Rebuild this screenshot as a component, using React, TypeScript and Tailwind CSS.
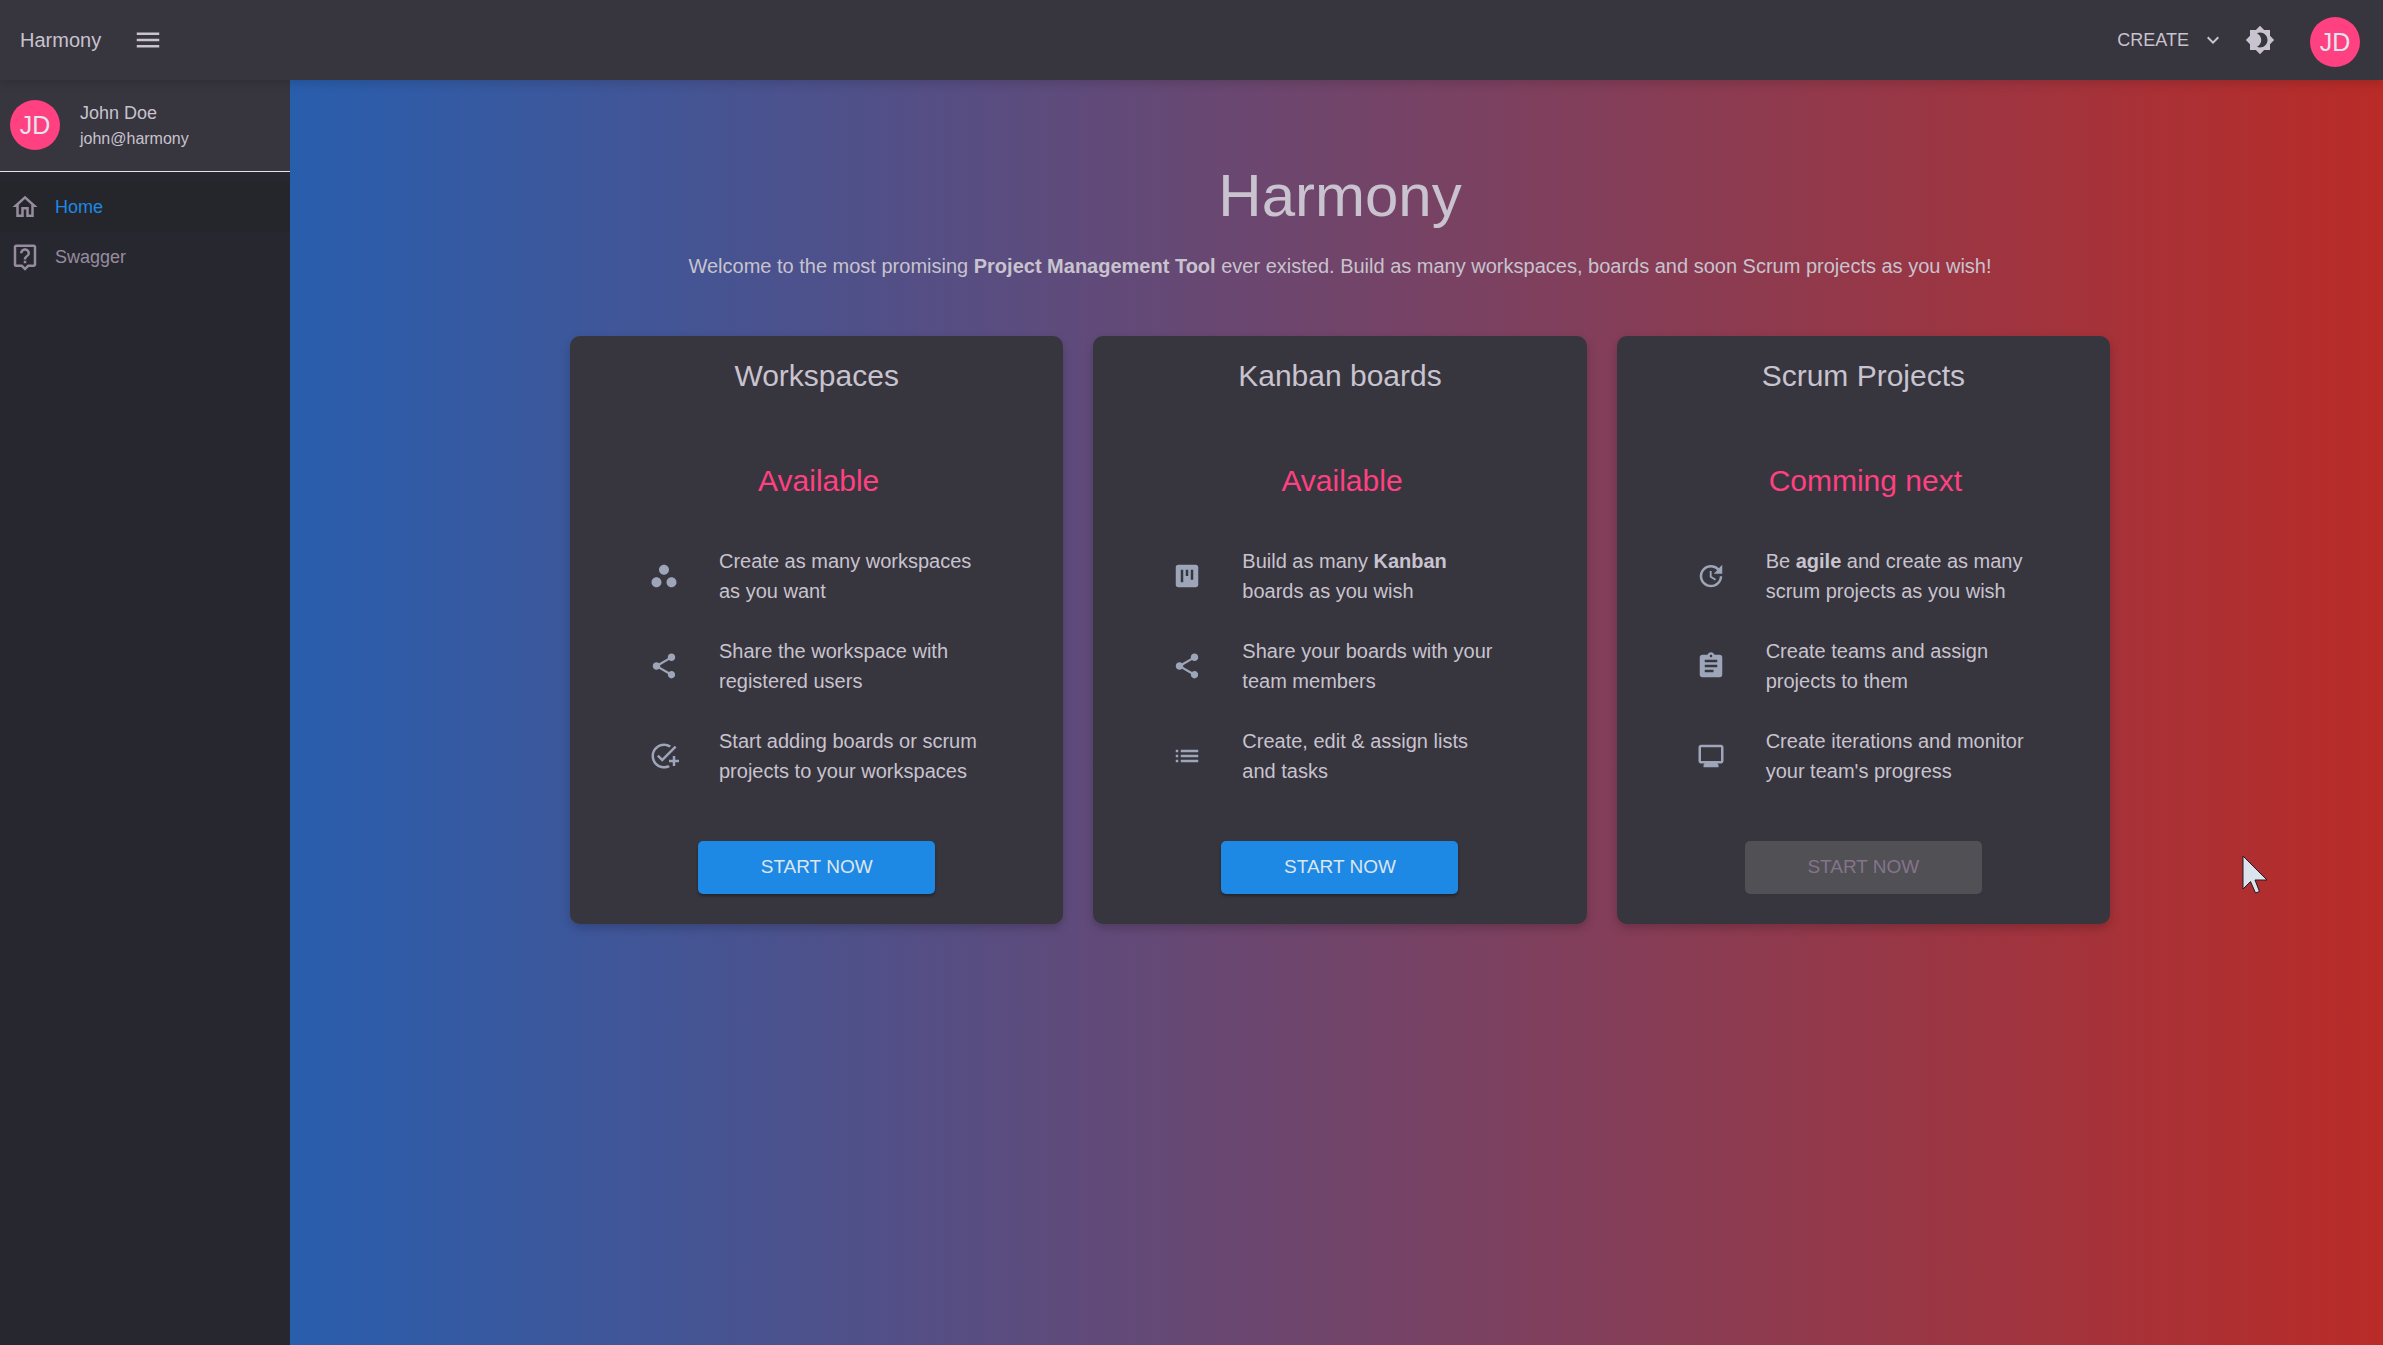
import type { ReactNode } from "react";
import type { IconType } from "react-icons";
import {
  MdAddTask,
  MdAssignment,
  MdBrightness4,
  MdExpandMore,
  MdList,
  MdMenu,
  MdMonitor,
  MdOutlineHome,
  MdOutlineLiveHelp,
  MdShare,
  MdUpdate,
  MdViewKanban,
  MdWorkspaces,
} from "react-icons/md";

type Feature = { icon: IconType; text: ReactNode };
type Plan = { title: string; status: string; disabled?: boolean; features: Feature[] };

const plans: Plan[] = [
  {
    title: "Workspaces",
    status: "Available",
    features: [
      { icon: MdWorkspaces, text: <>Create as many workspaces<br />as you want</> },
      { icon: MdShare, text: <>Share the workspace with<br />registered users</> },
      { icon: MdAddTask, text: <>Start adding boards or scrum<br />projects to your workspaces</> },
    ],
  },
  {
    title: "Kanban boards",
    status: "Available",
    features: [
      { icon: MdViewKanban, text: <>Build as many <b>Kanban</b><br />boards as you wish</> },
      { icon: MdShare, text: <>Share your boards with your<br />team members</> },
      { icon: MdList, text: <>Create, edit &amp; assign lists<br />and tasks</> },
    ],
  },
  {
    title: "Scrum Projects",
    status: "Comming next",
    disabled: true,
    features: [
      { icon: MdUpdate, text: <>Be <b>agile</b> and create as many<br />scrum projects as you wish</> },
      { icon: MdAssignment, text: <>Create teams and assign<br />projects to them</> },
      { icon: MdMonitor, text: <>Create iterations and monitor<br />your team's progress</> },
    ],
  },
];

function Avatar() {
  return (
    <span className="flex size-[50px] shrink-0 items-center justify-center rounded-full bg-[#ff4081] text-[25px] leading-none text-[#dfe5ee]">
      JD
    </span>
  );
}

function Header() {
  return (
    <header className="z-10 flex h-20 items-center bg-[#37353e] pl-5 pr-[23px] shadow-[0_3px_10px_rgba(0,0,0,0.15)]">
      <span className="text-xl">Harmony</span>
      <button type="button" aria-label="Toggle menu" className="ml-8">
        <MdMenu size={30} />
      </button>
      <div className="ml-auto flex items-center">
        <button type="button" className="flex items-center gap-3 text-lg">
          CREATE
          <MdExpandMore size={24} />
        </button>
        <button type="button" aria-label="Toggle dark mode" className="ml-5">
          <MdBrightness4 size={30} />
        </button>
        <button type="button" aria-label="Account" className="ml-[35px] pt-1">
          <Avatar />
        </button>
      </div>
    </header>
  );
}

function Sidebar() {
  return (
    <aside className="w-[290px] shrink-0 bg-[#27272f]">
      <div className="flex gap-5 border-b border-[#e6e4ea] bg-[#37353e] px-2.5 pb-[19px] pt-5">
        <Avatar />
        <div>
          <p className="text-lg leading-[26px]">John Doe</p>
          <p className="text-base leading-[26px]">john@harmony</p>
        </div>
      </div>
      <nav className="flex flex-col pt-2.5 text-lg text-[#978c9f]">
        <a href="#home" className="flex h-[50px] items-center gap-[15px] bg-[#25262b] px-2.5">
          <MdOutlineHome size={30} />
          <span className="text-[#1e88e5]">Home</span>
        </a>
        <a href="#swagger" className="flex h-[50px] items-center gap-[15px] px-2.5">
          <MdOutlineLiveHelp size={30} />
          <span>Swagger</span>
        </a>
      </nav>
    </aside>
  );
}

function PlanCard({ title, status, disabled, features }: Plan) {
  return (
    <section className="flex flex-col rounded-[10px] bg-[#37353e] pb-[30px] pt-5 shadow-[0_4px_10px_rgba(0,0,0,0.2)]">
      <h2 className="text-center text-3xl leading-10">{title}</h2>
      <p className="mt-[65px] pl-1 text-center text-3xl leading-10 text-[#ff4081]">{status}</p>
      <ul className="mt-[45px] flex flex-col gap-[30px] pl-[79px]">
        {features.map(({ icon: Icon, text }, i) => (
          <li key={i} className="flex items-center gap-10">
            <Icon size={30} className="shrink-0 text-[#9da6b9]" />
            <p className="text-xl leading-[30px]">{text}</p>
          </li>
        ))}
      </ul>
      <button
        type="button"
        disabled={disabled}
        className="mt-[55px] h-[53px] w-[237px] self-center rounded-[5px] bg-[#1e88e5] text-[19px] text-[#dfe5ee] shadow-[0_2px_3px_rgba(0,0,0,0.35)] disabled:bg-[#505055] disabled:text-[#85748c] disabled:shadow-none"
      >
        START NOW
      </button>
    </section>
  );
}

function Pointer() {
  return (
    <svg
      className="absolute right-[115px] top-[855px]"
      width="26"
      height="40"
      viewBox="0 0 26 40"
      aria-hidden="true"
    >
      <path
        d="M1 1v33l7.500-7.500 5 11.500 4-1.500-4.500-11.500h12z"
        fill="#dce3ec"
        stroke="#1c1c26"
        strokeWidth="1"
        strokeLinejoin="round"
      />
    </svg>
  );
}

export default function App() {
  return (
    <div className="relative flex min-h-screen flex-col bg-[linear-gradient(to_right,#1565c0,#b92b27)] font-['Liberation_Sans',sans-serif] text-[#c8c3ce]">
      <Header />
      <div className="flex grow">
        <Sidebar />
        <main className="flex grow flex-col items-center pl-[7px] pt-[81px]">
          <h1 className="text-6xl leading-[70px]">Harmony</h1>
          <p className="mt-5 text-xl leading-[30px]">
            Welcome to the most promising <b>Project Management Tool</b> ever existed. Build as many
            workspaces, boards and soon Scrum projects as you wish!
          </p>
          <div className="mt-[55px] grid w-full max-w-[1540px] grid-cols-3 gap-[30px]">
            {plans.map((plan) => (
              <PlanCard key={plan.title} {...plan} />
            ))}
          </div>
        </main>
      </div>
      <Pointer />
    </div>
  );
}
